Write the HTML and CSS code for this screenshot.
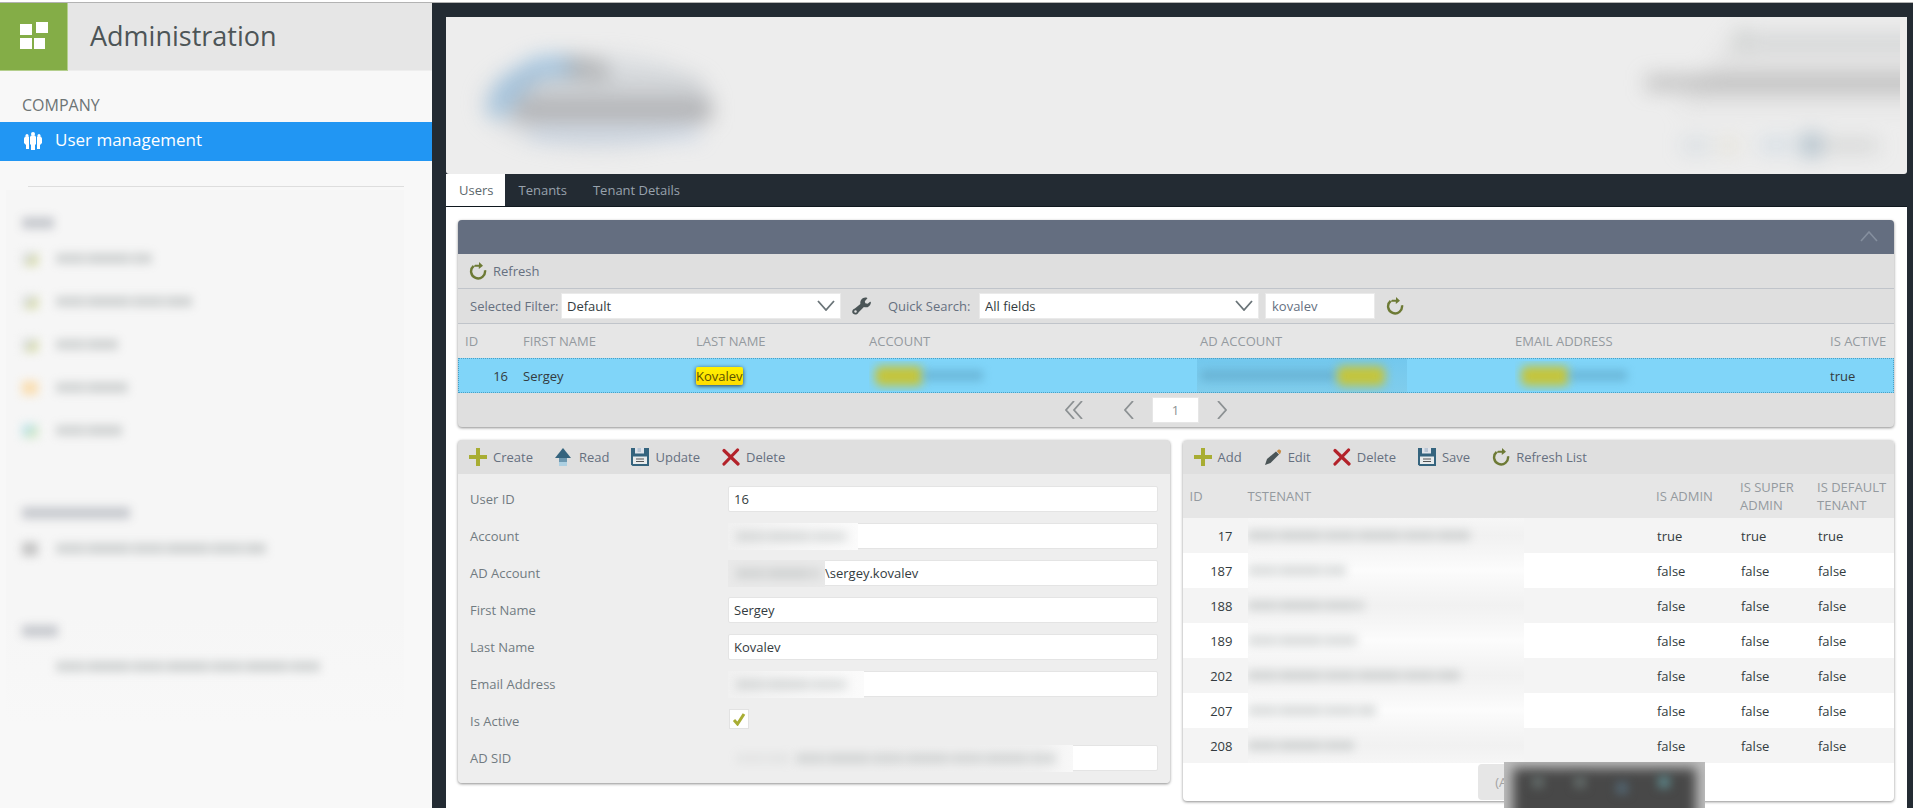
FILE: index.html
```html
<!DOCTYPE html>
<html lang="en">
<head>
<meta charset="utf-8">
<title>Administration</title>
<link rel="stylesheet" href="styles.css">
</head>
<body>
<svg class="defs" aria-hidden="true">
  <symbol id="i-refresh" viewBox="0 0 18 18"><path d="M4.6 4A7 7 0 1 0 16 8.300" fill="none" stroke="#6d7a35" stroke-width="2.400"/><path d="M10 0l4 3.800-4.200 3.200V4.800H4.500L6 2.800h4z" fill="#6d7a35"/></symbol>
  <symbol id="i-plus" viewBox="0 0 18 18"><path d="M7 0h4v7h7v4h-7v7H7v-7H0V7h7z" fill="#a8ad33"/></symbol>
  <symbol id="i-read" viewBox="0 0 18 18"><path d="M8 0l8 10H0z" fill="#35647e"/><path d="M4 10h8V14H4z" fill="#6d98b0"/><path d="M4 14h8v4H4z" fill="#add0e2"/></symbol>
  <symbol id="i-save" viewBox="0 0 18 18"><path d="M0 0h18v18H1.500L0 16.500z" fill="#35647e"/><path d="M4 0h9v5.500H4z" fill="#dfe3ea"/><path d="M6.500 0h3.500v4H6.500z" fill="#b9c6d4"/><path d="M2 8.500h14V16H2z" fill="#e8ebec"/><path d="M5 11h8M5 13.500h8" stroke="#555" stroke-width="1.200"/></symbol>
  <symbol id="i-delete" viewBox="0 0 18 18"><path d="M2 2.500l14 13.500M15.500 2L2 16" stroke="#b3222a" stroke-width="3.200" stroke-linecap="round"/></symbol>
  <symbol id="i-edit" viewBox="0 0 18 18"><path d="M1 17l2-6L12 3.500l3 3L6.500 15z" fill="#4b5557"/><path d="M12.800 3L15 1.200l2.200 1.500-.7 2.500-1 1z" fill="#c58a44"/></symbol>
  <symbol id="i-wrench" viewBox="0 0 20 18"><path d="M14 0c2 0 2.500.5 2 1.200L13.500 4l.5 2 2.500.5L19 4.500c.8-.3 1 .3.800 1.500-.8 3.500-4 5.300-7.300 4L7 15.500C6 18 3 19 1 17c-1.600-2-.6-4.500 2-5.400L8.800 7C8.300 3 10.500.2 14 0z" fill="#4b5557"/><circle cx="3.700" cy="14.800" r="1.300" fill="#dfdfdf"/></symbol>
  <symbol id="i-down" viewBox="0 0 18 11"><path d="M1 1l8 9 8-9" fill="none" stroke="#6a7478" stroke-width="1.800"/></symbol>
</svg>
<div class="topline"></div>
<div class="app">
  <aside class="sidebar">
    <header class="brand">
      <a class="brand-tile" href="#" aria-label="Home"><svg width="28" height="28" viewBox="0 0 28 28" fill="#fff"><path d="M0 2h12v11H0zM16 0h12v11H16zM0 16h12v11H0zM14 16h11v11H14z"/></svg></a>
      <h1>Administration</h1>
    </header>
    <h2>COMPANY</h2>
    <a class="nav-item" href="#"><svg width="18" height="18" viewBox="0 0 18 18" fill="#fff"><circle cx="9" cy="2" r="2"/><path d="M7 3.500h4l1 1.500v7l-1 1v5H7v-5l-1-1V5z"/><circle cx="3" cy="3.500" r="1.500"/><circle cx="15" cy="3.500" r="1.500"/><path d="M1 4.500h4v12.500H2v-4L0 11V6.500zM17 4.500h-4v12.500h3v-4l2-2V6.500z"/></svg>User management</a>
    <hr>
    <div class="hidden-nav">
      <div class="group"><i class="smudge head" style="width:32px"></i></div>
      <div class="line"><b class="dot olive"></b><i class="smudge" style="width:96px"></i></div>
      <div class="line"><b class="dot olive"></b><i class="smudge" style="width:136px"></i></div>
      <div class="line"><b class="dot olive"></b><i class="smudge" style="width:62px"></i></div>
      <div class="line"><b class="dot orange"></b><i class="smudge" style="width:72px"></i></div>
      <div class="line"><b class="dot teal"></b><i class="smudge" style="width:66px"></i></div>
      <div class="group later"><i class="smudge head" style="width:108px"></i></div>
      <div class="line"><b class="dot gray"></b><i class="smudge" style="width:210px"></i></div>
      <div class="group later"><i class="smudge head" style="width:36px"></i></div>
      <div class="line"><b class="dot"></b><i class="smudge" style="width:264px"></i></div>
    </div>
  </aside>
  <main class="main">
    <div class="banner">
      <svg width="320" height="157" viewBox="0 0 320 157">
        <g class="soft">
          <ellipse cx="150" cy="85" rx="115" ry="48" fill="#b9c3cc" opacity=".35"/>
          <path d="M40 98Q48 58 68 54Q90 30 130 42L126 62Q92 54 84 74Q68 80 60 100z" fill="#86b4dc" opacity=".62"/>
          <path d="M120 38l40 6 4 20-42-4z" fill="#8c8c8e" opacity=".5"/>
          <path d="M68 60h190v22H80z" fill="#a5a5a8" opacity=".22"/>
          <path d="M68 82h198v23H68z" fill="#909092" opacity=".55"/>
          <path d="M84 113h170v9H84z" fill="#a3bbdd" opacity=".5"/>
        </g>
      </svg>
      <svg width="340" height="157" viewBox="0 0 340 157">
        <g class="soft" transform="translate(56)">
          <path d="M120 12h240v80H60z" fill="#d0d0d0" opacity=".35"/>
          <path d="M120 12h12v22h-12z" fill="#a9b5ae" opacity=".4"/><path d="M132 22h228v7H132z" fill="#adb5b8" opacity=".5"/>
          <path d="M30 59h330v14H30z" fill="#8e8e8e" opacity=".5"/>
          <path d="M66 122h28v13H66z" fill="#aabccc" opacity=".35"/><path d="M104 122h18v13h-18z" fill="#d8cfae" opacity=".4"/><path d="M144 122h32v12h-32z" fill="#a3bdd4" opacity=".4"/><path d="M186 117h18v22h-18z" fill="#7796ab" opacity=".6"/><path d="M206 124h56v9h-56z" fill="#a5aaa8" opacity=".5"/>
        </g>
      </svg>
    </div>
    <nav class="tabs"><a class="tab active" href="#">Users</a><a class="tab" href="#">Tenants</a><a class="tab" href="#">Tenant Details</a></nav>
    <div class="content">
      <section class="panel">
        <div class="titlebar"><button type="button" aria-label="Collapse"><svg width="18" height="11" viewBox="0 0 18 11"><path d="M1 10l8-9 8 9" fill="none" stroke="#858f9e" stroke-width="1.600"/></svg></button></div>
        <div class="toolbar"><button type="button"><svg><use href="#i-refresh"/></svg>Refresh</button></div>
        <div class="filters">
          <label for="filter" class="l1">Selected Filter:</label>
          <span class="combo"><select id="filter"><option>Default</option></select><svg><use href="#i-down"/></svg></span>
          <button type="button" class="wrench" aria-label="Edit filter"><svg><use href="#i-wrench"/></svg></button>
          <label for="fields" class="l2">Quick Search:</label>
          <span class="combo"><select id="fields"><option>All fields</option></select><svg><use href="#i-down"/></svg></span>
          <input class="search" type="text" value="kovalev" aria-label="Search text">
          <button type="button" class="again" aria-label="Search"><svg><use href="#i-refresh"/></svg></button>
        </div>
        <table class="users">
          <colgroup><col class="c-id"><col class="c-name"><col class="c-name"><col class="c-account"><col class="c-ad"><col><col class="c-active"></colgroup>
          <thead><tr><th>ID</th><th>FIRST NAME</th><th>LAST NAME</th><th>ACCOUNT</th><th>AD ACCOUNT</th><th>EMAIL ADDRESS</th><th>IS ACTIVE</th></tr></thead>
          <tbody><tr><td class="num">16</td><td>Sergey</td><td><mark>Kovalev</mark></td>
            <td><div class="masked"><i class="glow"></i><i class="smudge blue" style="width:60px"></i></div></td>
            <td class="wide-mask"><div class="masked tint"><i class="smudge blue" style="width:136px"></i><i class="glow"></i></div></td>
            <td><div class="masked"><i class="glow"></i><i class="smudge blue" style="width:58px"></i></div></td>
            <td>true</td></tr></tbody>
        </table>
        <div class="pager">
          <button type="button" aria-label="First page"><svg width="18" height="18" viewBox="0 0 18 18"><path d="M9 0L1 9l8 9M17 0L9 9l8 9"/></svg></button>
          <button type="button" class="prev" aria-label="Previous page"><svg width="10" height="18" viewBox="0 0 10 18"><path d="M9 0L1 9l8 9"/></svg></button>
          <input type="text" value="1" aria-label="Page">
          <button type="button" aria-label="Next page"><svg width="10" height="18" viewBox="0 0 10 18"><path d="M1 0l8 9-8 9"/></svg></button>
        </div>
      </section>
      <div class="columns">
        <section class="panel">
          <div class="toolbar">
            <button type="button"><svg><use href="#i-plus"/></svg>Create</button>
            <button type="button"><svg><use href="#i-read"/></svg>Read</button>
            <button type="button"><svg><use href="#i-save"/></svg>Update</button>
            <button type="button"><svg><use href="#i-delete"/></svg>Delete</button>
          </div>
          <form class="form">
            <label for="uid">User ID</label><div class="field"><input id="uid" type="text" value="16"></div>
            <label for="acc">Account</label><div class="field"><input id="acc" type="text"><div class="veil fade" style="width:130px"><i class="smudge" style="width:112px"></i></div></div>
            <label for="ad">AD Account</label><div class="field"><input id="ad" class="domain" type="text" value="\sergey.kovalev"><div class="veil solid" style="width:97px"><i class="smudge" style="width:84px"></i></div></div>
            <label for="fn">First Name</label><div class="field"><input id="fn" type="text" value="Sergey"></div>
            <label for="ln">Last Name</label><div class="field"><input id="ln" type="text" value="Kovalev"></div>
            <label for="em">Email Address</label><div class="field"><input id="em" type="text"><div class="veil fade" style="width:136px"><i class="smudge" style="width:112px"></i></div></div>
            <label for="active">Is Active</label><div class="field"><input id="active" type="checkbox" checked><svg class="tick" width="14" height="14" viewBox="0 0 14 14"><path d="M2 8l3.500 4L12 2" fill="none" stroke="#a8ad33" stroke-width="3"/></svg></div>
            <label for="sid">AD SID</label><div class="field"><input id="sid" type="text"><div class="veil sid" style="width:345px"><i class="smudge faint" style="width:54px"></i><i class="smudge" style="width:260px"></i></div></div>
          </form>
        </section>
        <section class="panel tenants-panel">
          <div class="toolbar">
            <button type="button"><svg><use href="#i-plus"/></svg>Add</button>
            <button type="button"><svg><use href="#i-edit"/></svg>Edit</button>
            <button type="button"><svg><use href="#i-delete"/></svg>Delete</button>
            <button type="button"><svg><use href="#i-save"/></svg>Save</button>
            <button type="button"><svg><use href="#i-refresh"/></svg>Refresh List</button>
          </div>
          <table class="tenants">
            <colgroup><col class="c-id"><col><col class="c-flag"><col class="c-super"><col class="c-flag"></colgroup>
            <thead><tr><th>ID</th><th>TSTENANT</th><th>IS ADMIN</th><th>IS SUPER ADMIN</th><th>IS DEFAULT TENANT</th></tr></thead>
            <tbody>
              <tr><td class="num">17</td><td><div class="name"><i class="smudge" style="width:222px"></i></div></td><td>true</td><td>true</td><td>true</td></tr>
              <tr><td class="num">187</td><td><div class="name"><i class="smudge" style="width:98px"></i></div></td><td>false</td><td>false</td><td>false</td></tr>
              <tr><td class="num">188</td><td><div class="name"><i class="smudge" style="width:116px"></i></div></td><td>false</td><td>false</td><td>false</td></tr>
              <tr><td class="num">189</td><td><div class="name"><i class="smudge" style="width:110px"></i></div></td><td>false</td><td>false</td><td>false</td></tr>
              <tr><td class="num">202</td><td><div class="name"><i class="smudge" style="width:212px"></i></div></td><td>false</td><td>false</td><td>false</td></tr>
              <tr><td class="num">207</td><td><div class="name"><i class="smudge" style="width:128px"></i></div></td><td>false</td><td>false</td><td>false</td></tr>
              <tr><td class="num">208</td><td><div class="name"><i class="smudge" style="width:106px"></i></div></td><td>false</td><td>false</td><td>false</td></tr>
            </tbody>
          </table>
          <div class="foot"><button type="button">(A</button><div class="overlay"><div class="overlay-core"></div><b></b><b></b><b class="t1"></b><b class="t2"></b></div></div>
        </section>
      </div>
    </div>
  </main>
</div>
</body>
</html>
```
FILE: styles.css
```css
* { box-sizing: border-box; }
body { margin: 0; height: 100vh; overflow: hidden; display: flex; flex-direction: column; background: #fff; color: #333b40; font: 13px/18px "Open Sans", "Noto Sans", sans-serif; }
button { border: 0; background: none; padding: 0; font: inherit; color: inherit; }
input, select { font: inherit; color: #333b40; }
a { text-decoration: none; }
.defs { position: absolute; width: 0; height: 0; }
.topline { flex: none; height: 3px; border-bottom: 1px solid #b3b3b3; }
.app { flex: 1; min-height: 0; display: flex; background: #232b33; }

.sidebar { flex: none; width: 432px; background: #f8f8f8; }
.brand { display: flex; height: 68px; align-items: center; background: #e6e6e6; border-bottom: 1px solid #eee; }
.brand-tile { width: 68px; height: 68px; display: flex; align-items: center; justify-content: center; background: #84ad47; border-right: 1px solid #b4cf8d; border-bottom: 1px solid #b4cf8d; }
.brand h1 { margin: 0 0 2px 22px; font-size: 27px; line-height: 36px; font-weight: 400; color: #4d5557; }
.sidebar h2 { margin: 0; padding: 22px 0 4px 22px; font-size: 16px; line-height: 25px; font-weight: 500; color: #6d7475; }
.nav-item { display: flex; align-items: center; gap: 13px; height: 39px; padding: 0 24px 3px; background: #2196f3; color: #fff; font-size: 17px; line-height: 22px; }
.nav-item svg { margin-top: 2px; }
.sidebar hr { margin: 25px 28px 3px; border: 0; border-top: 1px solid #dedede; }
.hidden-nav { margin: 0 28px 0 6px; height: 533px; padding: 18px 0 0 16px; background: linear-gradient(#f6f6f6 80%, #f8f8f8); }
.group { height: 29px; display: flex; align-items: center; }
.group.later { margin-top: 46px; }
.line { display: flex; align-items: center; gap: 16px; height: 43px; }
.smudge { flex: none; display: block; height: 11px; filter: blur(5px); opacity: .42; background: repeating-linear-gradient(90deg, #a3a9a9 0 27px, #bcc0c0 27px 33px, #9fa5a5 33px 71px, #b8bcbc 71px 79px); }
.smudge.head { height: 12px; background: #9095a0; opacity: .45; }
.dot { width: 16px; height: 14px; filter: blur(5px); opacity: .7; }
.dot { margin-right: 2px; }
.dot.olive { background: linear-gradient(135deg, #d2d6d4 45%, #cad08c 60%); }
.dot.orange { background: #fcd494; }
.dot.teal { background: linear-gradient(135deg, #a9dce5 40%, #bfe0b2 60%); }
.dot.gray { background: #b0b0b0; }

.main { flex: 1; min-width: 0; margin: 14px 6px 0 14px; display: flex; flex-direction: column; }
.banner { flex: none; height: 157px; display: flex; justify-content: space-between; overflow: hidden; background: #ededed; border-radius: 0 0 3px 3px; padding-right: 7px; }
.soft { filter: blur(10px); }
.tabs { flex: none; display: flex; height: 33px; border-bottom: 1px solid #10181f; }
.tab { display: flex; align-items: center; padding: 0 13px; color: #98a2ad; }
.tab.active { padding: 0 12px 0 13px; background: #fff; color: #5c676c; }
.content { flex: 1; min-height: 0; background: #fff; padding: 13px 13px 0 12px; display: flex; flex-direction: column; gap: 13px; }

.panel { background: #dfdfdf; border-radius: 4px; box-shadow: 0 1px 3px rgba(0, 0, 0, .45); }
.titlebar { height: 34px; background: #646e80; border-radius: 4px 4px 0 0; display: flex; align-items: center; justify-content: flex-end; padding-right: 16px; }
.toolbar { display: flex; align-items: center; gap: 22px; height: 34px; padding: 0 11px; color: #66707f; }
.toolbar button { display: flex; align-items: center; gap: 6px; }
.toolbar svg, .again svg { display: block; width: 18px; height: 18px; }
.filters { display: flex; align-items: center; height: 36px; padding: 0 12px; border-top: 1px solid #c0c4ca; border-bottom: 1px solid #c0c4ca; color: #66707f; }
.l1 { width: 91px; white-space: nowrap; }
.l2 { width: 91px; margin-left: 17px; white-space: nowrap; }
.combo { position: relative; width: 280px; }
.combo select { appearance: none; width: 100%; height: 26px; padding: 0 5px; border: 1px solid #eaeaea; border-radius: 0; background: #fff; display: block; }
.combo svg { position: absolute; right: 6px; top: 7px; width: 18px; height: 11px; pointer-events: none; }
.wrench { margin-left: 11px; }
.wrench svg { display: block; width: 19px; height: 18px; }
.search { width: 110px; height: 26px; margin: 0 11px 0 6px; padding: 0 6px; border: 1px solid #eaeaea; background: #fff; color: #66707f; }

table { width: 100%; table-layout: fixed; border-collapse: collapse; }
th { padding: 0 7px; text-align: left; font-weight: 400; color: #949a9f; background: #e6e6e6; }
td { height: 35px; padding: 0 8px; }
.num { text-align: right; }
.c-id { width: 58px; } .c-name { width: 173px; } .c-account { width: 331px; } .c-ad { width: 315px; } .c-active { width: 71px; }
.c-flag { width: 84px; } .c-super { width: 77px; }
.users th { height: 34px; white-space: nowrap; }
.users th:last-child { padding-right: 0; }
.users tbody tr { background: #80d5f9; outline: 1px dotted #4b9fc4; outline-offset: -1px; }
.users td { padding: 0 7px; }
.users .num, .tenants .num { padding-right: 8px; }
mark { display: inline-block; background: linear-gradient(#fff200, #ffdc00); color: #5a5200; border-radius: 2px; box-shadow: 0 1px 4px rgba(0, 0, 0, .7); }
.masked { display: flex; align-items: center; height: 30px; padding: 0 6px; overflow: hidden; }
.masked.tint { width: 210px; height: 35px; padding: 0 4px; background: linear-gradient(#73c8ee, #80cdec); }
.users .wide-mask { padding: 0 4px; }
.glow { flex: none; width: 48px; height: 20px; background: #c4c53d; filter: blur(5px); border-radius: 6px; }
.smudge.blue { background: #5ea4c4; opacity: .6; }
.pager { display: flex; align-items: center; justify-content: center; gap: 18px; height: 34px; padding-right: 60px; }
.pager svg { display: block; fill: none; stroke: #8c9193; stroke-width: 1.800; }
.pager .prev { margin-left: 23px; }
.pager input { width: 47px; height: 26px; border: 1px solid #e6e6e6; background: #fff; text-align: center; color: #8c9193; }

.columns { display: grid; grid-template-columns: 1fr 1fr; gap: 13px; align-items: start; }
.form { display: grid; grid-template-columns: 258px 1fr; row-gap: 11px; align-items: center; padding: 12px; background: #eee; color: #717b81; border-radius: 0 0 4px 4px; }
.field { position: relative; height: 26px; }
.field input[type=text] { display: block; width: 100%; height: 26px; padding: 0 5px; border: 1px solid #e4e4e4; border-radius: 2px; background: #fff; }
.field input.domain { padding-left: 96px; }
.field input[type=checkbox] { appearance: none; display: block; width: 20px; height: 20px; margin: 1px; border: 1px solid #e2e2e2; background: #fff; }
.tick { position: absolute; left: 4px; top: 4px; pointer-events: none; }
.veil { position: absolute; left: 0; top: 0; height: 27px; display: flex; align-items: center; gap: 6px; padding-left: 8px; overflow: hidden; }
.fade { background: linear-gradient(90deg, #f0f0f0, #f6f6f6 50%, #fbfbfb); }
.solid { background: #e9e9e9; }
.sid { background: linear-gradient(90deg, #eee 40%, #f0f0f0 90%, #f8f8f8); }
.veil .smudge { opacity: .32; }
.veil .faint { opacity: .12; }

.tenants-panel { background: #fff; }
.tenants-panel .toolbar { background: #dfdfdf; border-radius: 4px 4px 0 0; }
.tenants th { height: 44px; }
.tenants tbody tr:nth-child(odd) { background: #f4f4f4; }
.name { width: 276px; height: 35px; margin-left: -1px; display: flex; align-items: center; overflow: hidden; background: linear-gradient(#f6f6f6, #fcfcfc 50%, #f6f6f6); }
tr:nth-child(odd) .name { background: linear-gradient(#f6f6f6, #f1f1f1 50%, #f6f6f6); }
.name .smudge { opacity: .36; }
.foot { position: relative; display: flex; justify-content: center; height: 38px; padding-top: 1px; }
.foot button { width: 120px; height: 36px; padding-left: 17px; text-align: left; background: #e6e6e6; color: #a3a3a3; border-radius: 4px; }
.overlay { position: absolute; left: calc(50% - 34px); top: -1px; width: 201px; height: 46px; display: flex; gap: 30px; padding: 14px 0 0 28px; overflow: hidden; background: #bdbdbd; }
.overlay-core { position: absolute; left: 9px; right: 9px; top: 6px; height: 60px; background: #484848; filter: blur(6px); }
.overlay b { position: relative; width: 12px; height: 12px; background: #626a68; filter: blur(5px); }
.overlay .t1 { margin-top: 6px; background: #526470; }
.overlay .t2 { background: #5c8386; }
```
